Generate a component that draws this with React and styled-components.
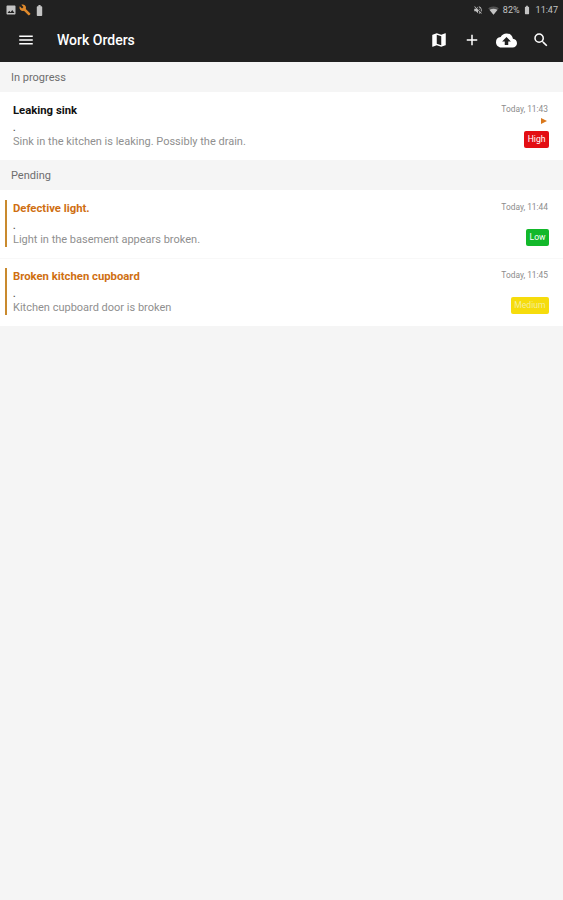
import styled, { createGlobalStyle } from 'styled-components';
import { MdMenu, MdMap, MdAdd, MdCloudUpload, MdSearch, MdImage, MdBuild, MdVolumeOff, MdSignalWifi3Bar, MdBatteryStd } from 'react-icons/md';

const GlobalStyle = createGlobalStyle`
  html, body { margin: 0; padding: 0; height: 100%; background: #f5f5f5; }
  body { font-family: Roboto, "Liberation Sans", sans-serif; }
`

const Page = styled.div`
  min-height: 900px;
  background: #f5f5f5;
`

const Header = styled.header`
  background: #212121;
  height: 62px;
  color: #fff;
  display: flex;
  flex-direction: column;
`

const StatusBar = styled.div`
  height: 20px;
  display: flex;
  align-items: center;
  justify-content: space-between;
  padding: 0 5px 2px 5px;
`

const StatusGroup = styled.div`
  display: flex;
  align-items: center;
  gap: 2px;
  color: #c4c4c4;
  font-size: 9px;
`

const Clock = styled.span`
  margin-left: 2px;
`

const Signal = styled.span`
  display: flex;
  margin: 0 2px 0 3px;
`

const Toolbar = styled.div`
  flex: 1;
  display: flex;
  align-items: center;
  padding: 0 13px 4px 17px;
`

const Title = styled.h1`
  margin: 0 0 0 22px;
  font-size: 14px;
  font-weight: 500;
  flex: 1;
`

const ToolIcons = styled.div`
  display: flex;
  align-items: center;
  gap: 15px;
`

const SectionLabel = styled.div`
  height: 30px;
  box-sizing: border-box;
  padding: 1px 0 0 11px;
  line-height: 29px;
  font-size: 11px;
  color: #6e6e6e;
`

const Row = styled.div`
  background: #fff;
  height: 68px;
  box-sizing: border-box;
  padding: 10px 14px 11px 5px;
  box-shadow: ${p => p.$divided ? 'inset 0 1px 0 #f8f8f8' : 'none'};
`

const RowInner = styled.div`
  height: 100%;
  display: flex;
  justify-content: space-between;
  border-left: 2px solid ${p => p.$pending ? '#c98a2e' : 'transparent'};
  padding-left: 6px;
`

const TextCol = styled.div`
  display: flex;
  flex-direction: column;
  padding-top: 1px;
`

const ItemTitle = styled.div`
  font-size: 11.3px;
  font-weight: 700;
  line-height: 16px;
  color: ${p => p.$pending ? '#cf6f12' : '#111'};
`

const Dot = styled.div`
  font-size: 9px;
  font-weight: 700;
  line-height: 6px;
  margin: 6px 0 4px;
  color: #555;
`

const Description = styled.div`
  font-size: 11px;
  line-height: 14px;
  color: #8f8f8f;
`

const MetaCol = styled.div`
  display: flex;
  flex-direction: column;
  align-items: flex-end;
`

const Time = styled.div`
  font-size: 8.4px;
  line-height: 12px;
  margin-top: 1px;
  margin-right: 1px;
  color: #8c8c8c;
`

const Arrow = styled.div`
  width: 0;
  height: 0;
  margin: 3px 2px 0 0;
  border-left: 6px solid #d9781c;
  border-top: 3.5px solid transparent;
  border-bottom: 3.5px solid transparent;
`

const Badge = styled.div`
  height: 17px;
  line-height: 17px;
  margin-top: auto;
  margin-bottom: 1px;
  padding: 0 3.5px;
  font-size: 8.6px;
  border-radius: 2px;
  color: ${p => p.$light ? '#f4ee9a' : '#fff'};
  background: ${p => p.$color};
`

function WorkOrder({ title, text, time, level, color, pending, playing, divided, light }) {
  return (
    <Row $divided={divided}>
      <RowInner $pending={pending}>
        <TextCol>
          <ItemTitle $pending={pending}>{title}</ItemTitle>
          <Dot>.</Dot>
          <Description>{text}</Description>
        </TextCol>
        <MetaCol>
          <Time>{time}</Time>
          {playing && <Arrow />}
          <Badge $color={color} $light={light}>{level}</Badge>
        </MetaCol>
      </RowInner>
    </Row>
  );
}

export default function App() {
  return (
    <Page>
      <GlobalStyle />
      <Header>
        <StatusBar>
          <StatusGroup>
            <MdImage size={12} />
            <MdBuild size={12} color="#e08a2c" />
            <MdBatteryStd size={13} />
          </StatusGroup>
          <StatusGroup>
            <MdVolumeOff size={10} />
            <Signal><MdSignalWifi3Bar size={11} /></Signal>
            <span>82%</span>
            <MdBatteryStd size={10} />
            <Clock>11:47</Clock>
          </StatusGroup>
        </StatusBar>
        <Toolbar>
          <MdMenu size={18} />
          <Title>Work Orders</Title>
          <ToolIcons>
            <MdMap size={18} />
            <MdAdd size={18} />
            <MdCloudUpload size={21} />
            <MdSearch size={18} />
          </ToolIcons>
        </Toolbar>
      </Header>
      <SectionLabel>In progress</SectionLabel>
      <WorkOrder title="Leaking sink" text="Sink in the kitchen is leaking. Possibly the drain." time="Today, 11:43" level="High" color="#e30e14" playing />
      <SectionLabel>Pending</SectionLabel>
      <WorkOrder title="Defective light." text="Light in the basement appears broken." time="Today, 11:44" level="Low" color="#12b82a" pending />
      <WorkOrder title="Broken kitchen cupboard" text="Kitchen cupboard door is broken" time="Today, 11:45" level="Medium" color="#f6dc0c" pending divided light />
    </Page>
  );
}
